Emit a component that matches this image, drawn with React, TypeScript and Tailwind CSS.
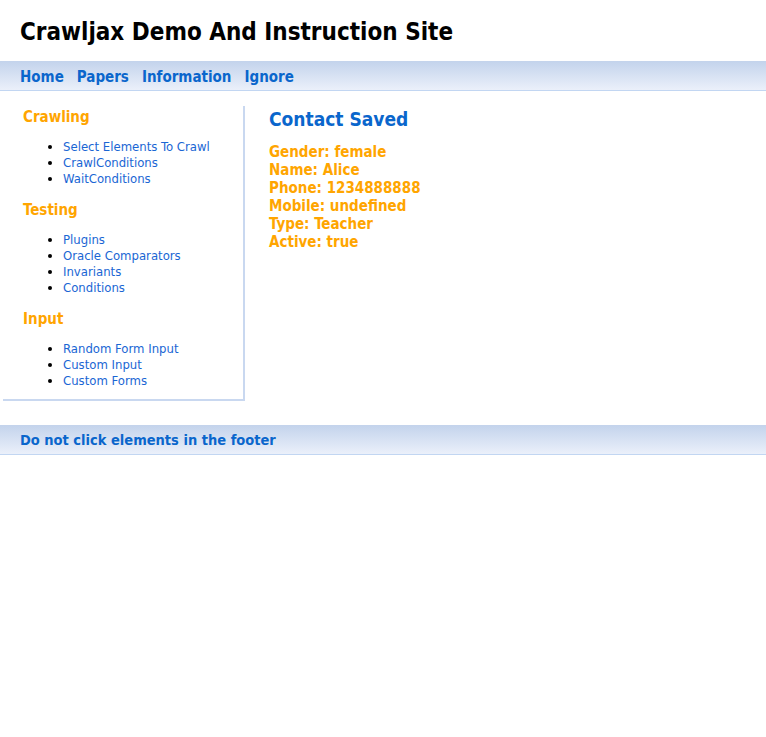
import React from "react";

const font = { fontFamily: '"DejaVu Sans Condensed", "DejaVu Sans", sans-serif' };

function Section({ title, items, last }: { title: string; items: string[]; last?: boolean }) {
  return (
    <div>
      <h3 className="text-[15px] font-bold text-[#ffa500] leading-[20px] pl-[20px]">{title}</h3>
      <ul className={`list-disc pl-[60px] mt-[12px] ${last ? "mb-0" : "mb-[13px]"} text-[13px] leading-[16px] text-black`}>
        {items.map((i) => (
          <li key={i}>
            <a className="text-[#1a66d4]">{i}</a>
          </li>
        ))}
      </ul>
    </div>
  );
}

export default function App() {
  return (
    <div className="w-[766px] min-h-[737px] bg-white" style={font}>
      <div className="h-[61px] flex items-center pl-[20px] pt-[2px]">
        <h1 className="text-[24px] font-bold text-black leading-none">Crawljax Demo And Instruction Site</h1>
      </div>
      <div className="h-[30px] flex items-center gap-[13px] pl-[20px] pt-[3px] bg-gradient-to-b from-[#c3d3ec] to-[#ebf0fa] border-b border-[#c2d6f2]">
        {["Home", "Papers", "Information", "Ignore"].map((n) => (
          <a key={n} className="text-[15px] font-bold text-[#0a66cc]">{n}</a>
        ))}
      </div>
      <div className="flex pt-[15px]">
        <div className="ml-[3px] w-[242px] border-r-2 border-b-2 border-[#c9d8f0] pt-[1px] pb-[10px]">
          <Section title="Crawling" items={["Select Elements To Crawl", "CrawlConditions", "WaitConditions"]} />
          <Section title="Testing" items={["Plugins", "Oracle Comparators", "Invariants", "Conditions"]} />
          <Section title="Input" items={["Random Form Input", "Custom Input", "Custom Forms"]} last />
        </div>
        <div className="pl-[24px] pt-[1px]">
          <h2 className="text-[19px] font-bold text-[#0a66cc] leading-[24px]">Contact Saved</h2>
          <div className="mt-[12px] text-[15px] font-bold text-[#ffa500] leading-[18px]">
            <div>Gender: female</div>
            <div>Name: Alice</div>
            <div>Phone: 1234888888</div>
            <div>Mobile: undefined</div>
            <div>Type: Teacher</div>
            <div>Active: true</div>
          </div>
        </div>
      </div>
      <div className="mt-[24px] h-[30px] flex items-center pl-[20px] pt-[2px] bg-gradient-to-b from-[#c3d3ec] to-[#ebf0fa] border-b border-[#c2d6f2]">
        <span className="text-[14.5px] font-bold text-[#0a66cc]">Do not click elements in the footer</span>
      </div>
    </div>
  );
}
